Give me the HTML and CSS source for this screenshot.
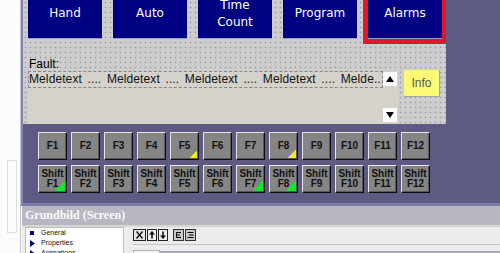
FILE: index.html
```html
<!DOCTYPE html>
<html lang="de">
<head>
<meta charset="UTF-8">
<title>Grundbild (Screen)</title>
<link rel="stylesheet" href="styles.css">
</head>
<body>

<div class="app">
    <div class="side"><div class="side-thumb"></div></div>

    <div class="main">
        <div class="editor">
            <div class="canvas">
                <div class="nav">
                    <div class="nav-btn">Hand</div>
                    <div class="nav-btn">Auto</div>
                    <div class="nav-btn">Time<br>Count</div>
                    <div class="nav-btn">Program</div>
                    <div class="nav-btn active">Alarms</div>
                </div>

                <div class="fault-label">Fault:</div>
                <div class="alarm-row">
                    <div class="alarm-view">
                        <div class="alarm-list">
                            <div class="alarm-line">Meldetext .... Meldetext .... Meldetext .... Meldetext .... Melde...</div>
                        </div>
                        <div class="alarm-scroll">
                            <div class="scroll-btn"><svg width="8" height="6" viewBox="0 0 8 6"><polygon points="4,0 8,6 0,6" fill="#000"/></svg></div>
                            <div class="scroll-btn"><svg width="8" height="6" viewBox="0 0 8 6"><polygon points="0,0 8,0 4,6" fill="#000"/></svg></div>
                        </div>
                    </div>
                    <div class="info-btn">Info</div>
                </div>
            </div>

            <div class="fkeys">
                <div class="fkey">F1</div>
                <div class="fkey">F2</div>
                <div class="fkey">F3</div>
                <div class="fkey">F4</div>
                <div class="fkey tri-yellow">F5</div>
                <div class="fkey">F6</div>
                <div class="fkey">F7</div>
                <div class="fkey tri-yellow">F8</div>
                <div class="fkey">F9</div>
                <div class="fkey">F10</div>
                <div class="fkey">F11</div>
                <div class="fkey">F12</div>

                <div class="fkey tri-green">Shift<br>F1</div>
                <div class="fkey">Shift<br>F2</div>
                <div class="fkey">Shift<br>F3</div>
                <div class="fkey">Shift<br>F4</div>
                <div class="fkey">Shift<br>F5</div>
                <div class="fkey">Shift<br>F6</div>
                <div class="fkey tri-green">Shift<br>F7</div>
                <div class="fkey tri-green">Shift<br>F8</div>
                <div class="fkey">Shift<br>F9</div>
                <div class="fkey">Shift<br>F10</div>
                <div class="fkey">Shift<br>F11</div>
                <div class="fkey">Shift<br>F12</div>
            </div>
        </div>

        <div class="props">
            <div class="props-title">Grundbild (Screen)</div>
            <div class="props-body">
                <ul class="tree">
                    <li><span class="bullet"><svg width="4" height="4"><rect width="4" height="4" fill="#000080"/></svg></span>General</li>
                    <li><span class="bullet"><svg width="5" height="7"><polygon points="0,0 5,3.5 0,7" fill="#000080"/></svg></span>Properties</li>
                    <li><span class="bullet"><svg width="5" height="7"><polygon points="0,0 5,3.5 0,7" fill="#000080"/></svg></span>Animations</li>
                </ul>
                <div class="props-pane">
                    <div class="toolbar">
                        <div class="tool-group">
                            <svg width="13" height="12" viewBox="0 0 13 12"><rect x="0.5" y="0.5" width="12" height="11" fill="#e4e4e4" stroke="#222"/><path d="M3.5 2.5l6 7M9.5 2.5l-6 7" stroke="#000" stroke-width="1.2"/></svg>
                            <svg width="10" height="12" viewBox="0 0 10 12"><rect x="0.5" y="0.5" width="9" height="11" fill="#eee" stroke="#222"/><path d="M5 4.5v5" stroke="#000" stroke-width="1.5"/><polygon points="5,2 8,5.5 2,5.5" fill="#000"/></svg>
                            <svg width="10" height="12" viewBox="0 0 10 12"><rect x="0.5" y="0.5" width="9" height="11" fill="#eee" stroke="#222"/><path d="M5 2.5v5" stroke="#000" stroke-width="1.5"/><polygon points="5,10 8,6.5 2,6.5" fill="#000"/></svg>
                        </div>
                        <div class="tool-group">
                            <svg width="11" height="12" viewBox="0 0 11 12"><rect x="0.5" y="0.5" width="10" height="11" fill="#c8c8c8" stroke="#333"/><path d="M8 3.5H3.5v5H8M3.5 6H7" fill="none" stroke="#000"/></svg>
                            <svg width="11" height="12" viewBox="0 0 11 12"><rect x="0.5" y="0.5" width="10" height="11" fill="#c8c8c8" stroke="#333"/><path d="M2.5 3.5h6M4 6h4.5M2.5 8.5h6" fill="none" stroke="#000"/></svg>
                        </div>
                    </div>
                    <div class="pane-foot">
                        <div class="tab"></div>
                        <div class="tab-rest"></div>
                    </div>
                </div>
            </div>
        </div>
    </div>
</div>

</body>
</html>
```

FILE: styles.css
```css
* {
    box-sizing: border-box;
}
html, body {
    margin: 0;
    padding: 0;
}
body {
    width: 500px;
    height: 253px;
    overflow: hidden;
    background-color: #fff;
    font-family: "Liberation Sans", Arial, sans-serif;
}
.app {
    display: flex;
    height: 253px;
}
.side {
    width: 21px;
    flex: none;
    background-color: #fcfcfc;
    border-right: 1px solid #c2c2cc;
    padding: 160px 0 0 7px;
}
.side-thumb {
    width: 10px;
    height: 73px;
    border: 1px solid #dedede;
}
.main {
    flex: 1;
    min-width: 0;
    display: flex;
    flex-direction: column;
}

/* screen editor */
.editor {
    height: 206px;
    flex: none;
    background-color: #5d5b83;
    border-left: 2px solid #8583b3;
    border-bottom: 3px solid #7b79a9;
}
.canvas {
    width: 423px;
    height: 124px;
    overflow: hidden;
    background-color: #cdcdcd;
    background-image: radial-gradient(circle, #9a9a9a 0.7px, transparent 1.1px);
    background-size: 5px 5px;
}
.nav {
    display: flex;
    gap: 11px;
    padding-left: 5px;
}
.nav-btn {
    width: 74px;
    height: 39px;
    padding-bottom: 11px;
    display: flex;
    align-items: center;
    justify-content: center;
    text-align: center;
    background-color: #000082;
    border-bottom: 1px solid #9c9cc4;
    color: #fff;
    font-family: "DejaVu Sans", sans-serif;
    font-size: 12px;
    line-height: 17px;
}
.nav-btn.active {
    outline: 5px solid #e3142e;
}
.fault-label {
    margin: 18px 0 0 6px;
    font-size: 12px;
    line-height: 14px;
    color: #000;
}
.alarm-row {
    display: flex;
    align-items: flex-start;
    padding-left: 5px;
}
.alarm-view {
    width: 370px;
    height: 53px;
    display: flex;
    background-color: #d5d2cb;
}
.alarm-list {
    flex: 1;
    min-width: 0;
}
.alarm-line {
    height: 17px;
    border: 1px dashed #858585;
    font-size: 12px;
    line-height: 15px;
    letter-spacing: 0.1px;
    word-spacing: 2.2px;
    white-space: nowrap;
    overflow: hidden;
    color: #111;
}
.alarm-scroll {
    width: 15px;
    display: flex;
    flex-direction: column;
    justify-content: space-between;
    padding: 1px 1px 2px 0;
}
.scroll-btn {
    height: 14px;
    display: flex;
    align-items: center;
    justify-content: center;
    background-color: #fff;
}
.info-btn {
    width: 36px;
    height: 27px;
    margin: -1px 0 0 6px;
    display: flex;
    align-items: center;
    justify-content: center;
    background-color: #fafa76;
    border-right: 1px solid #a4a4a4;
    border-bottom: 1px solid #a4a4a4;
    color: #555;
    font-size: 12px;
}

/* function keys */
.fkeys {
    display: grid;
    grid-template-columns: repeat(12, 29px);
    grid-auto-rows: 28px;
    gap: 5px 4px;
    padding: 8px 0 0 15px;
}
.fkey {
    display: flex;
    flex-direction: column;
    align-items: center;
    justify-content: center;
    background-color: #858585;
    background-repeat: no-repeat;
    background-position: right bottom;
    border: 1px solid;
    border-color: #e6e6e6 #0c0c0c #0c0c0c #e6e6e6;
    box-shadow: inset -1px -1px #585858;
    color: #111;
    font-size: 10px;
    font-weight: bold;
    line-height: 10px;
    text-align: center;
}
.tri-yellow {
    background-image: linear-gradient(to top left, #f2f200 50%, transparent 50%);
    background-size: 10px 10px;
}
.tri-green {
    background-image: linear-gradient(to top left, #10e830 50%, transparent 50%);
    background-size: 12px 12px;
}

/* properties window */
.props {
    flex: 1;
    display: flex;
    flex-direction: column;
    border-left: 1px solid #fff;
    background-color: #fff;
}
.props-title {
    height: 19px;
    flex: none;
    padding-left: 3px;
    background-color: #b7b6c1;
    color: #fafafa;
    font-family: "Liberation Serif", serif;
    font-size: 12px;
    font-weight: bold;
    line-height: 19px;
}
.props-body {
    flex: 1;
    display: flex;
    border-top: 2px solid #d6d6d6;
    background-color: #ececec;
}
.tree {
    width: 99px;
    margin: 0 0 0 3px;
    padding: 0 0 0 3px;
    list-style: none;
    background-color: #fff;
    border: 1px solid #bcbcbc;
    font-size: 7px;
    line-height: 10px;
    color: #111;
}
.tree li {
    display: flex;
    align-items: center;
}
.bullet {
    width: 12px;
    display: flex;
    align-items: center;
    padding-left: 1px;
}
.props-pane {
    flex: 1;
    padding: 2px 0 0 9px;
}
.toolbar {
    display: flex;
    gap: 5px;
    height: 13px;
}
.tool-group {
    display: flex;
    gap: 1px;
}
.pane-foot {
    display: flex;
    margin-top: 2px;
    padding-top: 5px;
    border-top: 1px solid #c6c6c6;
}
.tab {
    width: 27px;
    height: 8px;
    background-color: #f6f6f6;
    border: 1px solid #b0b0b0;
    border-bottom: none;
}
.tab-rest {
    flex: 1;
    height: 8px;
    margin-top: 1px;
    background-color: #a9a8b8;
}
```
